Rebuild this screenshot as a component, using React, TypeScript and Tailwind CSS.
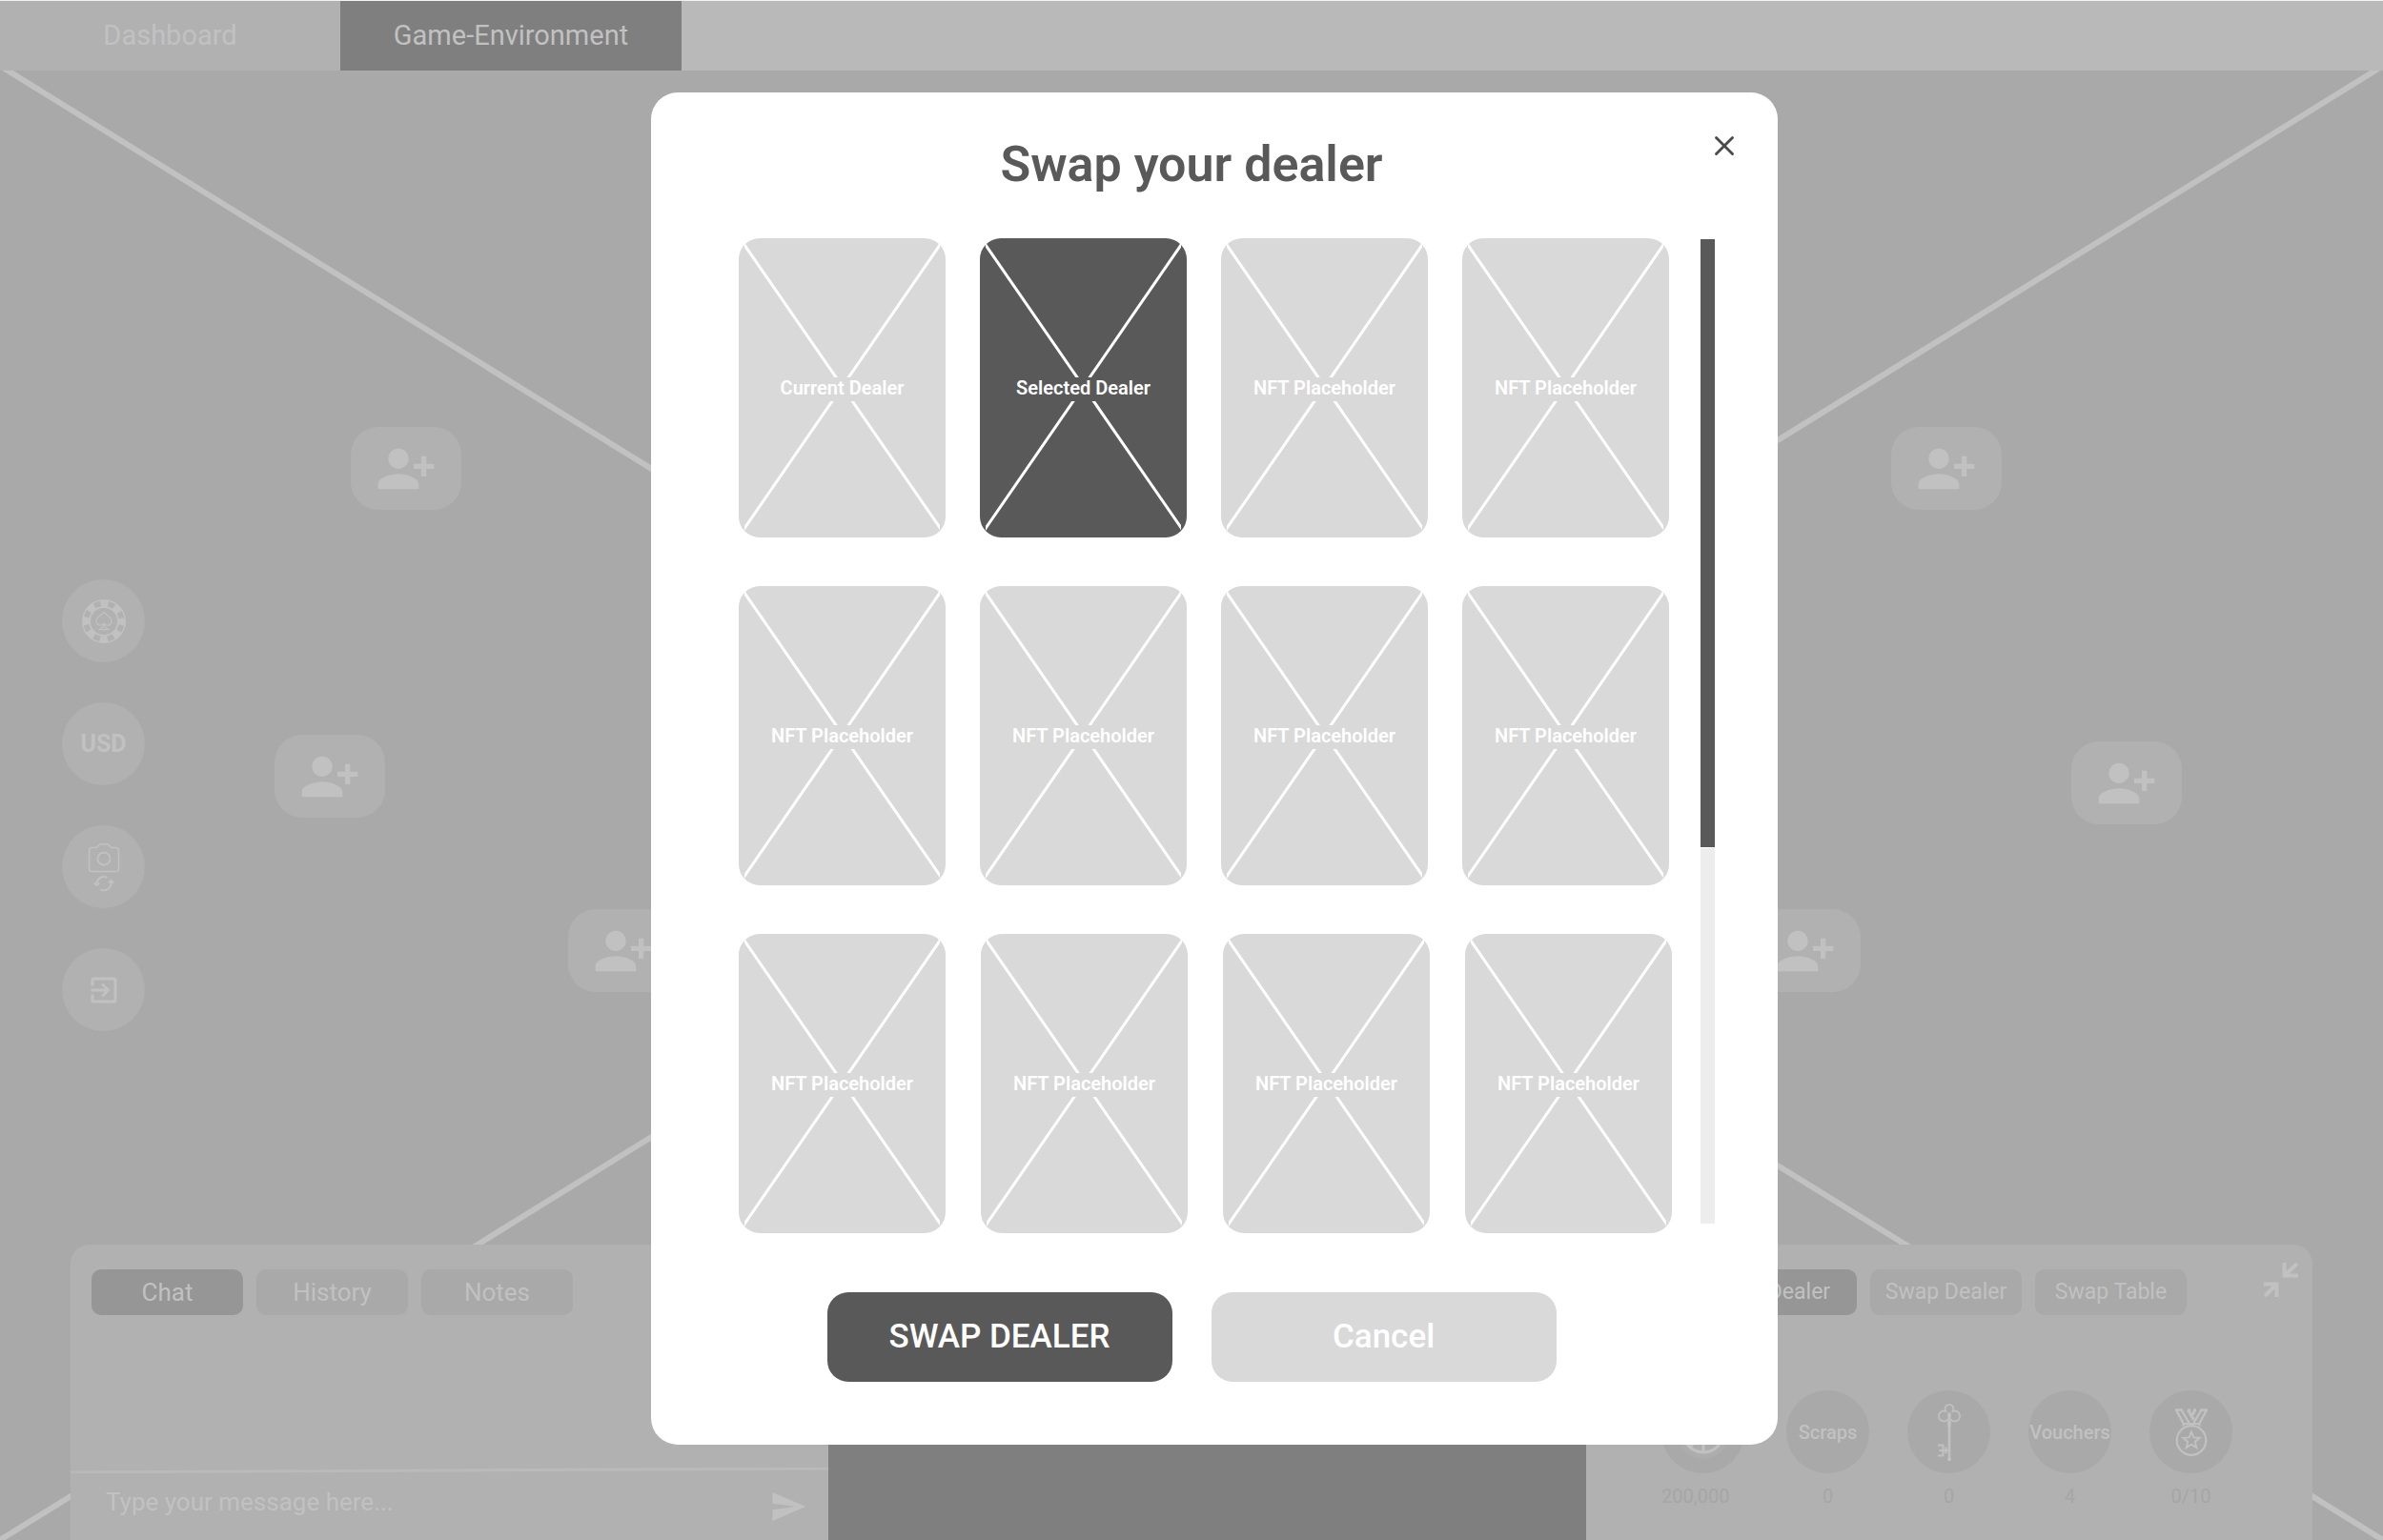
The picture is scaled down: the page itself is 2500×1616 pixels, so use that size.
import { useState } from "react";
import { MdExitToApp, MdPersonAddAlt1, MdSend } from "react-icons/md";
import { X } from "lucide-react";

const seats = [
	{ id: 1, position: "left-[368px] top-[374px]" },
	{ id: 2, position: "left-[288px] top-[697px]" },
	{ id: 3, position: "left-[596px] top-[880px]" },
	{ id: 4, position: "right-[400px] top-[374px]" },
	{ id: 5, position: "right-[211px] top-[704px]" },
	{ id: 6, position: "right-[548px] top-[880px]" },
];

const dealerRows = [
	{
		gap: "gap-9",
		names: [
			"Current Dealer",
			"Selected Dealer",
			"NFT Placeholder",
			"NFT Placeholder",
		],
	},
	{ gap: "gap-9", names: Array(4).fill("NFT Placeholder") },
	{ gap: "gap-[37px]", names: Array(4).fill("NFT Placeholder") },
];

const ChipIcon = () => (
	<svg width="46" height="46" viewBox="0 0 46 46" fill="none">
		<circle cx="23" cy="23" r="18.5" stroke="#c1c1c1" strokeWidth="9" />
		<circle
			cx="23"
			cy="23"
			r="18.8"
			stroke="#b1b1b1"
			strokeWidth="5.6"
			strokeDasharray="6.8 7.965"
			transform="rotate(12.1 23 23)"
		/>
		<path
			d="M23 13.5c2 2.600 8 4.500 8 9.300 0 4.700-5.400 5.800-8 2.300-2.600 3.500-8 2.400-8-2.300 0-4.800 6-6.700 8-9.300zM23 25.500c.4 2.800 1.800 4.800 5 6.200h-10c3.200-1.400 4.600-3.400 5-6.200z"
			stroke="#c1c1c1"
			strokeWidth="1.300"
			strokeLinejoin="round"
		/>
	</svg>
);

const CameraSwapIcon = () => (
	<svg width="34" height="52" viewBox="0 0 34 52" fill="none" stroke="#c1c1c1">
		<path
			d="M4.500 5.500H9c1.500 0 2.500-3.800 4.500-3.800h7c2 0 3 3.800 4.500 3.800h4.500a3 3 0 0 1 3 3v19a3 3 0 0 1-3 3h-25a3 3 0 0 1-3-3v-19a3 3 0 0 1 3-3z"
			strokeWidth="1.600"
		/>
		<circle cx="17" cy="17" r="6.500" strokeWidth="1.800" />
		<path d="M10.500 19c2 6 11 6 13 0" strokeWidth="1.300" />
		<path
			d="M20.500 36.800a8 8 0 0 0-11.200 6.500M13.500 49.600a8 8 0 0 0 11.200-6.800"
			strokeWidth="2"
		/>
		<path
			d="M6.500 42.700h6l-3 3.400zM21.500 42.200h6l-3-3.400z"
			fill="#c1c1c1"
			strokeWidth="1"
		/>
	</svg>
);

const ChipStackIcon = () => (
	<svg width="58" height="58" viewBox="0 0 58 58" fill="none">
		<circle cx="29" cy="29" r="28" fill="#adadad" />
		<circle cx="29" cy="29" r="21" stroke="#c1c1c1" strokeWidth="3" />
		<path d="M29 8v42M15 44l28-28" stroke="#c1c1c1" strokeWidth="3" />
	</svg>
);

const KeyIcon = () => (
	<svg width="26" height="60" viewBox="0 0 26 60" fill="none" stroke="#c1c1c1">
		<path
			d="M10.300 8.800a4.400 4.400 0 1 1 5.400 0M10.300 8.500a5.400 5.400 0 1 0 1.500 7.500M15.700 8.500a5.400 5.400 0 1 1-1.500 7.500"
			strokeWidth="1.700"
		/>
		<path d="M13 11v48" strokeWidth="2.600" />
		<path
			d="M13 11v2M13 19v4M13 58v0.500"
			strokeWidth="3.600"
			strokeLinecap="round"
		/>
		<path
			d="M1 43.500h5.500v11H1M2.500 49h10M9.500 45.500v7"
			strokeWidth="2"
		/>
	</svg>
);

const MedalIcon = () => (
	<svg width="36" height="50" viewBox="0 0 36 50" fill="none" stroke="#c1c1c1">
		<circle cx="18" cy="33.500" r="15.300" strokeWidth="2.200" />
		<path d="M9.500 18.500v-3.500M26.500 18.500v-3.500M10 16h16" strokeWidth="2" />
		<path
			d="M2 1.500l7.500 14M7.500 1.500l8 13.500M34 1.500l-7.500 14M28.500 1.500l-8 13.500M1 1.500h8M27 1.500h8"
			strokeWidth="2.400"
		/>
		<path d="M14.500 1.500l6 10.500M22 1.500l-3 5" strokeWidth="3.200" />
		<path d="M14 1.300h3M20 1.300h3" strokeWidth="2" />
		<path
			d="M18 24.500l2.400 5.900 6.300.4-4.900 4.100 1.600 6.200-5.400-3.400-5.400 3.400 1.600-6.200-4.900-4.100 6.300-.4z"
			strokeWidth="1.900"
		/>
	</svg>
);

const CollapseIcon = () => (
	<svg
		width="38"
		height="38"
		viewBox="0 0 38 38"
		fill="none"
		stroke="#c1c1c1"
		strokeWidth="4"
	>
		<path d="M22.500 1v13.500H37M23.500 13.500L36 2M1 23.500h13.500V37M13.500 24.500L2 36" />
	</svg>
);

const actions = [
	{ label: "Chips", content: <ChipIcon /> },
	{ label: "Currency", content: "USD" },
	{ label: "Switch camera", content: <CameraSwapIcon /> },
	{ label: "Leave table", content: <MdExitToApp size={36} /> },
];

const items = [
	{
		label: "Chips",
		content: <ChipStackIcon />,
		amount: "200,000",
		column: "w-[91px] items-start",
	},
	{
		label: "Scraps",
		content: "Scraps",
		amount: "0",
		column: "w-[87px] items-center",
	},
	{
		label: "Keys",
		content: <KeyIcon />,
		amount: "0",
		column: "w-[87px] items-center",
	},
	{
		label: "Vouchers",
		content: "Vouchers",
		amount: "4",
		column: "w-[87px] items-center",
	},
	{
		label: "Medals",
		content: <MedalIcon />,
		amount: "0/10",
		column: "w-[87px] items-center",
	},
];

interface TabsProps {
	tabs: string[];
	textSize: string;
}

const PanelTabs = ({ tabs, textSize }: TabsProps) => {
	const [active, setActive] = useState(tabs[0]);

	return (
		<div className="flex gap-3.5">
			{tabs.map((tab) => (
				<button
					key={tab}
					onClick={() => setActive(tab)}
					className={`h-12 w-[159px] rounded-[10px] text-[#c1c1c1] ${textSize} ${
						tab === active ? "bg-[#969696]" : "bg-[#a9a9a9]"
					}`}
				>
					{tab}
				</button>
			))}
		</div>
	);
};

const ChatPanel = () => (
	<section className="flex flex-col rounded-tl-[20px] bg-[#b1b1b1]">
		<div className="px-[22px] pt-[26px]">
			<PanelTabs tabs={["Chat", "History", "Notes"]} textSize="text-[26px]" />
		</div>
		<div className="flex-1" />
		<svg
			className="h-1.5 w-full"
			viewBox="0 0 795 6"
			preserveAspectRatio="none"
		>
			<path d="M0 5L795 1" stroke="#bababa" strokeWidth="3" />
		</svg>
		<form className="flex h-[70px] items-center justify-between pr-[22px] pl-[37px]">
			<input
				type="text"
				aria-label="Message"
				placeholder="Type your message here..."
				className="h-12 flex-1 bg-transparent pb-2.5 text-[26px] text-[#c1c1c1] outline-none placeholder:text-[#c1c1c1]"
			/>
			<button type="button" aria-label="Send" className="text-[#c1c1c1]">
				<MdSend size={40} />
			</button>
		</form>
	</section>
);

const DealerPanel = () => (
	<section className="flex flex-col justify-between rounded-tr-[20px] bg-[#b1b1b1] pt-[18px] pb-8">
		<div className="flex items-start justify-between pr-3.5 pl-[125px]">
			<div className="pt-2">
				<PanelTabs
					tabs={["Tip Dealer", "Swap Dealer", "Swap Table"]}
					textSize="text-[23px]"
				/>
			</div>
			<button aria-label="Collapse">
				<CollapseIcon />
			</button>
		</div>
		<ul className="flex gap-10 pl-[79px]">
			{items.map((item) => (
				<li
					key={item.label}
					className={`flex flex-col gap-2.5 ${item.column}`}
				>
					<span
						aria-label={item.label}
						className="flex size-[87px] items-center justify-center rounded-full bg-[#a9a9a9] text-[20px] font-medium text-[#c1c1c1]"
					>
						{item.content}
					</span>
					<span className="text-[20px] leading-7 text-[#a6a6a6]">
						{item.amount}
					</span>
				</li>
			))}
		</ul>
	</section>
);

interface CardProps {
	name: string;
	selected: boolean;
	onSelect: () => void;
}

const DealerCard = ({ name, selected, onSelect }: CardProps) => {
	const color = selected ? "bg-[#595959]" : "bg-[#d9d9d9]";

	return (
		<button
			aria-pressed={selected}
			onClick={onSelect}
			className={`relative flex h-[314px] w-[217px] items-center justify-center rounded-[22px] pt-[3px] ${color}`}
		>
			<svg
				className="absolute inset-y-0 left-[6px]"
				width="205"
				height="314"
				viewBox="0 0 205 314"
				stroke="#fff"
				strokeWidth="3"
			>
				<path d="M-1 5.700L207 306.500M206 5.700L-2 307.300" />
			</svg>
			<span
				className={`relative pb-[3px] text-[20px] leading-[22px] font-semibold text-white ${color}`}
			>
				{name}
			</span>
		</button>
	);
};

const SwapDealerModal = () => {
	const [selected, setSelected] = useState("0-1");

	return (
		<div className="fixed inset-0 flex items-center justify-center pb-[3px] pl-12">
			<div
				role="dialog"
				aria-modal="true"
				aria-labelledby="swap-title"
				className="relative w-[1182px] max-w-full rounded-[28px] bg-white pt-[46px] pb-[66px]"
			>
				<h1
					id="swap-title"
					className="pr-12 pb-[47px] text-center text-[52px] leading-[60px] font-semibold text-[#595959]"
				>
					Swap your dealer
				</h1>
				<button
					aria-label="Close"
					className="absolute top-[39px] right-[39px] text-[#4a4a4a]"
				>
					<X size={34} />
				</button>

				<div className="flex justify-between pr-[66px] pl-[92px]">
					<div className="flex flex-col gap-[51px]">
						{dealerRows.map((row, r) => (
							<div key={r} className={`flex ${row.gap}`}>
								{row.names.map((name, c) => (
									<DealerCard
										key={c}
										name={name}
										selected={selected === `${r}-${c}`}
										onSelect={() => setSelected(`${r}-${c}`)}
									/>
								))}
							</div>
						))}
					</div>
					{/* Scrollbar */}
					<div className="mb-2.5 flex w-[15px] flex-col gap-px pt-px">
						<div className="h-[638px] bg-[#595959]" />
						<div className="flex-1 bg-[#ededed]" />
					</div>
				</div>

				<div className="flex justify-center gap-[41px] pt-[62px] pr-12 text-[35px] font-medium text-white">
					<button className="h-[94px] w-[362px] rounded-[22px] bg-[#595959]">
						SWAP DEALER
					</button>
					<button className="h-[94px] w-[362px] rounded-[22px] bg-[#d9d9d9]">
						Cancel
					</button>
				</div>
			</div>
		</div>
	);
};

const App = () => (
	<div className="flex min-h-screen flex-col bg-[#a9a9a9] font-[Roboto,sans-serif]">
		<nav className="relative z-10 flex h-[74px] border-t border-[#f2f2f2] bg-[#b9b9b9] text-[29px]">
			<a
				href="#dashboard"
				className="flex w-[357px] items-center justify-center bg-[#b1b1b1] text-[#c1c1c1]"
			>
				Dashboard
			</a>
			<a
				href="#game"
				aria-current="page"
				className="flex w-[358px] items-center justify-center bg-[#7f7f7f] text-[#c1c1c1]"
			>
				Game-Environment
			</a>
		</nav>

		<main className="relative flex flex-1 flex-col justify-between">
			<svg
				className="absolute inset-0 h-full w-full"
				viewBox="0 0 2500 1542"
				preserveAspectRatio="none"
				stroke="#c1c1c1"
				strokeWidth="6"
			>
				<path d="M0 -5L2500 1542M2500 -5L0 1542" />
			</svg>

			{seats.map((seat) => (
				<button
					key={seat.id}
					aria-label={`Invite player to seat ${seat.id}`}
					className={`absolute flex h-[87px] w-[116px] items-center justify-center rounded-[29px] bg-[#b1b1b1] text-[#c1c1c1] ${seat.position}`}
				>
					<MdPersonAddAlt1 size={64} />
				</button>
			))}

			<aside className="relative flex w-fit flex-col gap-[42px] pt-[534px] pl-[65px]">
				{actions.map((action) => (
					<button
						key={action.label}
						aria-label={action.label}
						className="flex size-[87px] items-center justify-center rounded-full bg-[#b1b1b1] text-[25px] font-bold text-[#c1c1c1]"
					>
						{action.content}
					</button>
				))}
			</aside>

			<div className="relative grid h-[310px] grid-cols-[795fr_795fr_762fr] px-[74px]">
				<ChatPanel />
				<div className="bg-[#7f7f7f]" />
				<DealerPanel />
			</div>
		</main>

		<SwapDealerModal />
	</div>
);

export default App;
